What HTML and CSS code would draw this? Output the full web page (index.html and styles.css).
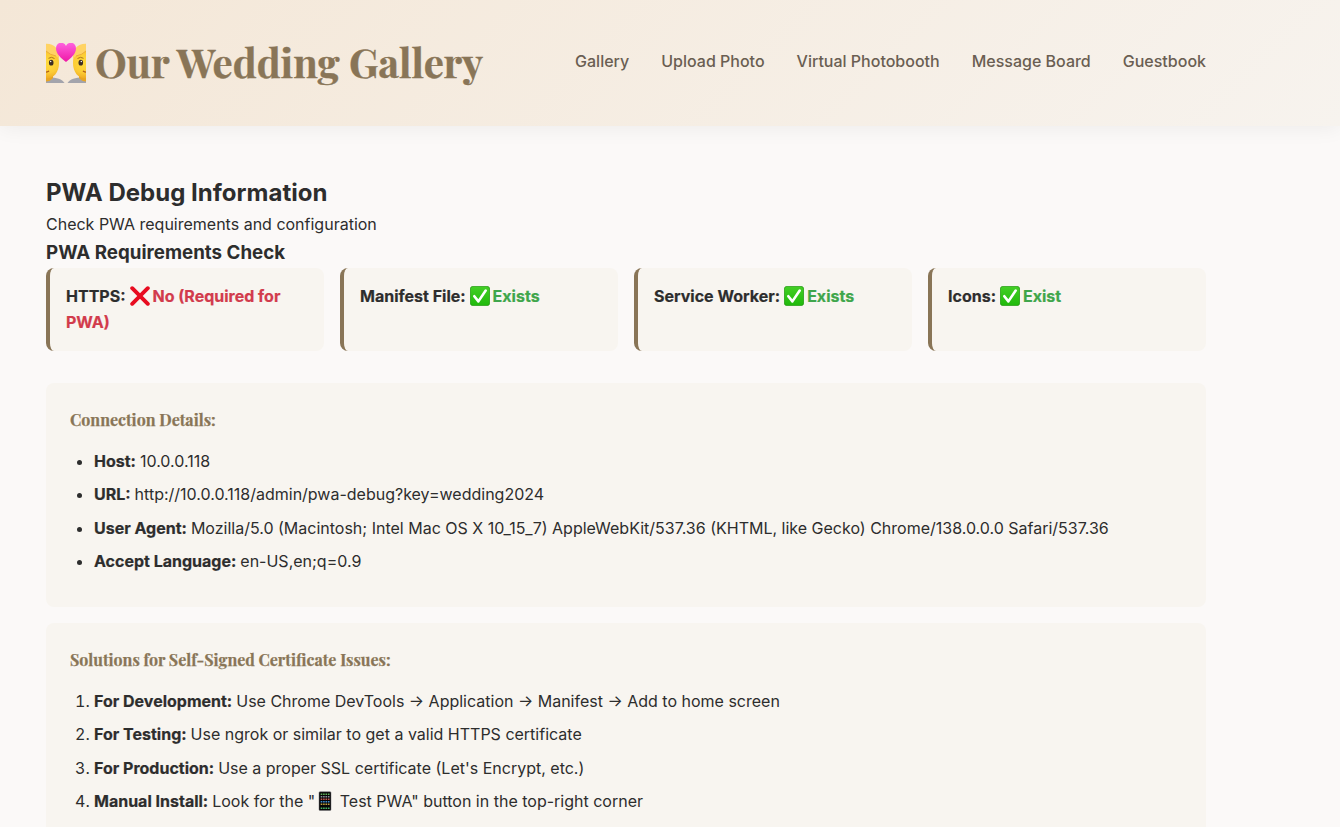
FILE: index.html
```html
<!DOCTYPE html>
<html lang="en">
<head>
<meta charset="utf-8">
<title>PWA Debug Information</title>
<link rel="stylesheet" href="styles.css">
</head>
<body>
<svg class="defs" width="0" height="0" aria-hidden="true">
  <defs>
    <linearGradient id="green" x1="0" y1="0" x2="0" y2="1"><stop offset="0" stop-color="#43cf25"/><stop offset="1" stop-color="#20b90b"/></linearGradient>
    <linearGradient id="pink" x1="0" y1="0" x2="0" y2="1"><stop offset="0" stop-color="#ff62df"/><stop offset="1" stop-color="#ee19a5"/></linearGradient>
    <radialGradient id="face" gradientUnits="userSpaceOnUse" cx="3" cy="20" r="16"><stop offset="0" stop-color="#ffdc3c"/><stop offset=".6" stop-color="#fccb35"/><stop offset="1" stop-color="#eda820"/></radialGradient>
    <symbol id="check" viewBox="0 0 20 20">
      <rect x=".4" y=".4" width="19.2" height="19.2" rx="2.5" fill="url(#green)" stroke="#239b12" stroke-width=".8"/>
      <path d="M4.3 10.2 8.4 15.4 15.7 4.5" fill="none" stroke="#fff" stroke-width="2.6" stroke-linecap="round" stroke-linejoin="round"/>
    </symbol>
  </defs>
</svg>
<header class="header">
  <div class="container header-row">
    <h1 class="brand">
      <svg class="brand-icon" viewBox="0 0 40 40">
        <g id="person">
          <path d="M0 34.500C8 34 16 35 18.500 40H0Z" fill="#a3a4ac"/>
          <path d="M0 30H7V35Q4 38.500 0 38.500Z" fill="#e8a523"/>
          <path d="M0 8H10Q13 13 13 20C13 29 8 35.500 0 35.500Z" fill="url(#face)"/>
          <path d="M0 .8C8 .5 14 6 13 17Q12 14 10 13Q4 12 0 8Z" fill="#ffd364"/>
          <path d="M0 8Q4 12 10 13" fill="none" stroke="#e9aa38" stroke-width=".9"/>
          <ellipse cx="5.200" cy="19.700" rx="2.300" ry="2.900" fill="#3d2e24"/>
          <circle cx="4.700" cy="18.500" r=".7" fill="#fff"/>
          <path d="M2.500 15.300Q5.500 13.300 8.500 15.500" fill="none" stroke="#a8741e" stroke-width="1"/>
          <path d="M0 29.200Q2 29 3 27.800" fill="none" stroke="#a95514" stroke-width="1.200"/>
        </g>
        <use href="#person" transform="translate(40 0) scale(-1 1)"/>
        <path d="M20 19C15 15 10 11 10 5.500C10 -1.500 18 -2 20 3C22 -2 30 -1.500 30 5.500C30 11 25 15 20 19Z" fill="url(#pink)"/>
      </svg>
      <span class="brand-name">Our Wedding Gallery</span>
    </h1>
    <nav class="nav">
      <a>Gallery</a><a>Upload Photo</a><a>Virtual Photobooth</a><a>Message Board</a><a>Guestbook</a>
    </nav>
  </div>
</header>
<main class="container main">
  <h2 class="title">PWA Debug Information</h2>
  <p class="subtitle">Check PWA requirements and configuration</p>
  <h3 class="section-title">PWA Requirements Check</h3>
  <div class="cards">
    <div class="card"><strong>HTTPS:</strong> <span class="bad"><svg class="mark" viewBox="0 0 20 20"><path d="M2.2 2.2 17.8 17.8M17.8 2.2 2.2 17.8" stroke="#e80c20" stroke-width="3.9" stroke-linecap="round"/></svg>No (Required for PWA)</span></div>
    <div class="card"><strong>Manifest File:</strong> <span class="good"><svg class="mark"><use href="#check"/></svg>Exists</span></div>
    <div class="card"><strong>Service Worker:</strong> <span class="good"><svg class="mark"><use href="#check"/></svg>Exists</span></div>
    <div class="card"><strong>Icons:</strong> <span class="good"><svg class="mark"><use href="#check"/></svg>Exist</span></div>
  </div>
  <section class="panel">
    <h4 class="panel-title">Connection Details:</h4>
    <ul class="list">
      <li><strong>Host:</strong> 10.0.0.118</li>
      <li><strong>URL:</strong> http://10.0.0.118/admin/pwa-debug?key=wedding2024</li>
      <li><strong>User Agent:</strong> Mozilla/5.0 (Macintosh; Intel Mac OS X 10_15_7) AppleWebKit/537.36 (KHTML, like Gecko) Chrome/138.0.0.0 Safari/537.36</li>
      <li><strong>Accept Language:</strong> en-US,en;q=0.9</li>
    </ul>
  </section>
  <section class="panel">
    <h4 class="panel-title">Solutions for Self-Signed Certificate Issues:</h4>
    <ol class="list">
      <li><strong>For Development:</strong> Use Chrome DevTools → Application → Manifest → Add to home screen</li>
      <li><strong>For Testing:</strong> Use ngrok or similar to get a valid HTTPS certificate</li>
      <li><strong>For Production:</strong> Use a proper SSL certificate (Let's Encrypt, etc.)</li>
      <li><strong>Manual Install:</strong> Look for the "<svg class="phone" viewBox="0 0 20 20"><rect x="4" y=".7" width="12" height="18.8" rx="1" fill="#050506" stroke="#77777a" stroke-width=".5"/><g fill="none" stroke-width="1.5" stroke-dasharray="1.6 .8"><path d="M5.7 3.3H15" stroke="#61b35b"/><path d="M5.7 5.8H15" stroke="#8a8f9b"/><path d="M5.7 8.3H15" stroke="#c65b50"/><path d="M5.7 10.8H15" stroke="#398bd2"/><path d="M5.7 13.3H15" stroke="#c0a03e"/><path d="M5.7 17.3H15" stroke="#48b768"/></g></svg> Test PWA" button in the top-right corner</li>
    </ol>
  </section>
</main>
</body>
</html>
```
FILE: styles.css
```css
* { box-sizing: border-box; margin: 0; padding: 0; }
html { height: 100%; overflow: hidden; }
body {
  height: 827px;
  overflow: hidden;
  background: #fbf9f8;
  color: #2d2d2d;
  font: 16px/1.6 Inter, "Liberation Sans", sans-serif;
}
.defs { position: absolute; }
.container { width: 1160px; margin-left: 46px; }
.header {
  height: 126px;
  background: linear-gradient(135deg, #f4e7d7 0%, #f7f3ee 100%);
  box-shadow: 0 2px 20px rgba(0, 0, 0, .06);
}
.header-row { display: flex; align-items: center; justify-content: space-between; height: 124px; }
.brand { display: flex; align-items: center; gap: 9px; padding-top: 2px; color: #897557; }
.brand-icon { width: 40px; height: 40px; overflow: hidden; }
.brand-name {
  padding-bottom: 2px;
  font: 700 40px/64px "Playfair Display", "Liberation Serif", serif;
  white-space: nowrap;
  -webkit-text-stroke: .4px #897557;
}
.nav { display: flex; gap: 32px; color: #6a5e52; font-weight: 500; white-space: nowrap; }
.main { padding-top: 48px; }
.title { font-size: 24px; letter-spacing: .02px; }
.section-title { font-size: 18.72px; letter-spacing: .03px; }
strong { margin-right: -.5px; -webkit-text-stroke: .2px currentColor; }
.cards { display: grid; grid-template-columns: repeat(4, 1fr); gap: 16px; margin-bottom: 32px; }
.card {
  min-height: 83.2px;
  padding: 16px;
  border-left: 4px solid #897557;
  border-radius: 8px;
  background: #f8f5f0;
}
.good, .bad { font-weight: 700; -webkit-text-stroke: .2px currentColor; }
.good { color: #3fa64b; }
.bad { color: #d23b4c; }
.mark { width: 20px; height: 20px; margin-right: 3px; vertical-align: -4px; }
.phone { width: 20px; height: 20px; vertical-align: -4px; }
.panel { margin-bottom: 16px; padding: 24px; border-radius: 8px; background: #f8f5f0; }
.panel-title {
  margin-bottom: 16px;
  color: #897557;
  font: 700 16px/25.6px "Playfair Display", "Liberation Serif", serif;
  -webkit-text-stroke: .25px #897557;
}
.list { padding-left: 24px; }
.list li { margin-bottom: 8px; }
```
